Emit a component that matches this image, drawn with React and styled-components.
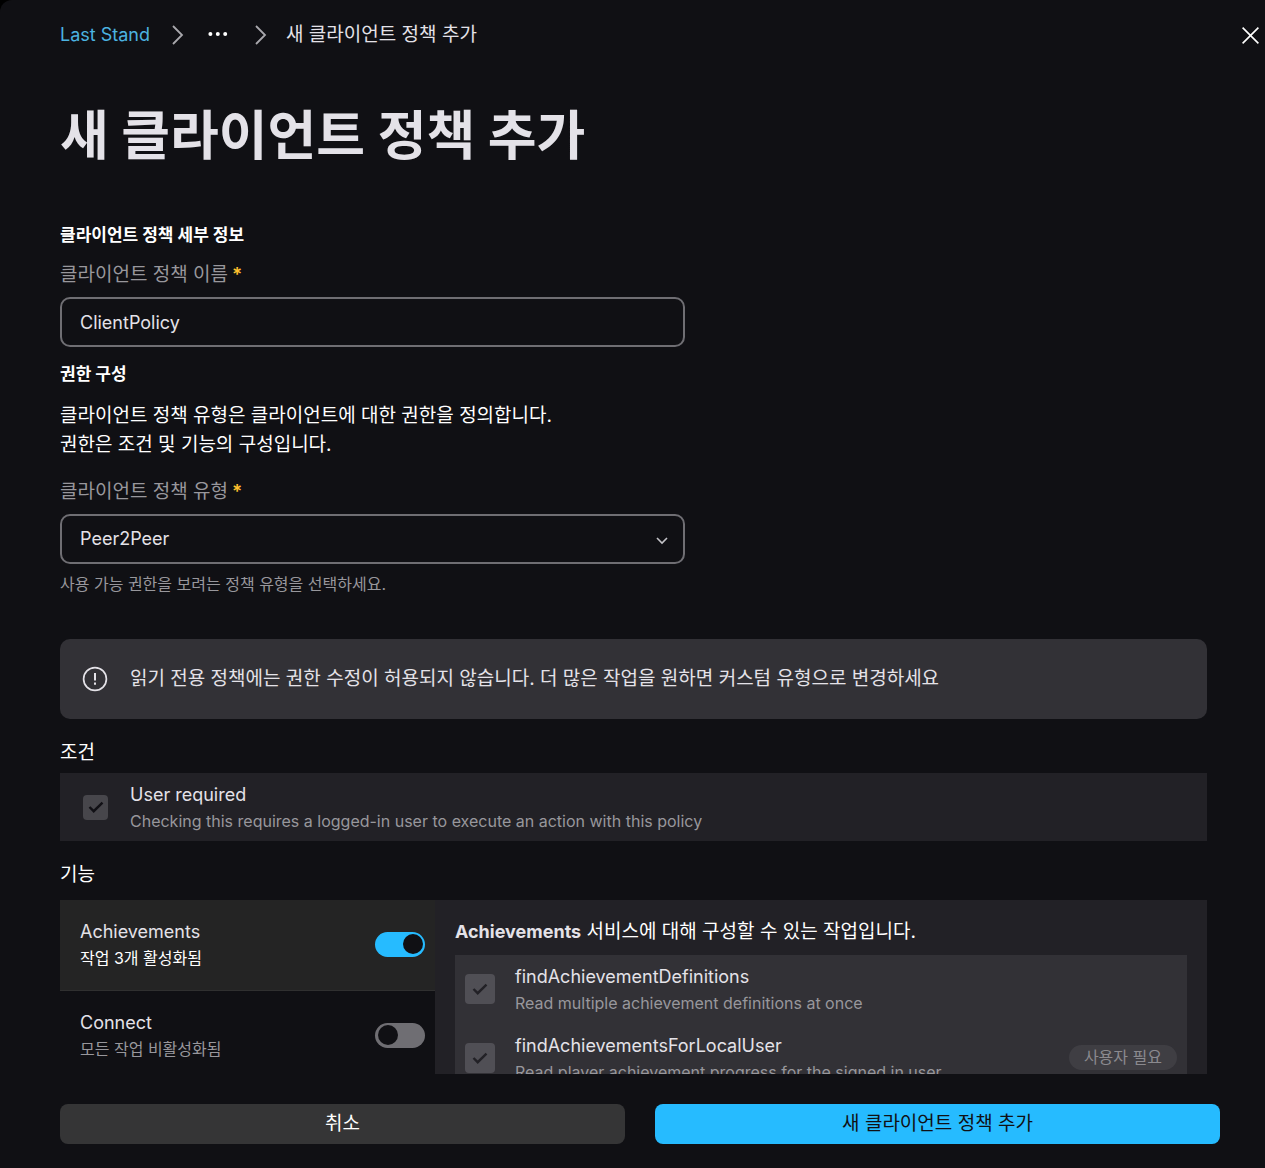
import * as React from 'react';
import styled, { createGlobalStyle, ThemeProvider } from 'styled-components';

const theme = {
    page: '#101014',
    panel: '#222126',
    panelActive: '#242424',
    raised: '#323136',
    border: '#6f6e73',
    text: '#ffffff',
    textSoft: '#e4e2e8',
    textMuted: '#98979c',
    accent: '#26bbff',
    link: '#4cb3e0',
    required: '#ffc02e',
};

const GlobalStyle = createGlobalStyle`
    *, *::before, *::after {
        box-sizing: border-box;
    }

    body {
        margin: 0;
        background: #000;
        color: ${theme.text};
        font-family: Inter, 'Noto Sans CJK KR', sans-serif;
        font-size: 18px;
        line-height: 28px;
    }

    h1, h2, h3, p, ul, ol {
        margin: 0;
        padding: 0;
    }

    ul, ol {
        list-style: none;
    }

    button, input, select {
        font: inherit;
        color: inherit;
    }
`;

const Page = styled.div`
    display: flex;
    flex-direction: column;
    height: 100vh;
    padding: 0 45px 24px 60px;
    border-top-left-radius: 12px;
    background: ${props => props.theme.page};
`;

const Header = styled.header`
    display: flex;
    flex: none;
    align-items: center;
    justify-content: space-between;
    height: 70px;
    margin-right: -40px;
`;

const Breadcrumbs = styled.ol`
    display: flex;
    align-items: center;
    gap: 18px;
`;

const Crumb = styled.li`
    display: flex;
    align-items: center;
    gap: 21px;
    color: ${props => props.theme.textSoft};
    font-size: ${props => (props.$current ? '19px' : '18px')};

    a {
        color: ${props => props.theme.link};
        text-decoration: none;
    }
`;

const IconButton = styled.button`
    display: flex;
    padding: ${props => (props.$padded ? '0 5px' : '0')};
    border: none;
    background: transparent;
    color: ${props => props.theme.text};
    cursor: pointer;
`;

const Content = styled.main`
    flex: 1;
    min-height: 0;
    padding: 34px 13px 0 0;
    overflow: auto;
    scrollbar-width: none;
`;

const Title = styled.h1`
    margin-bottom: 55px;
    color: ${props => props.theme.textSoft};
    font-size: 53px;
    font-weight: 700;
    line-height: 64px;
`;

const SectionTitle = styled.h2`
    font-size: 17px;
    font-weight: 700;
    line-height: 24px;
`;

const Description = styled.p`
    margin: 15px 0 19px;
    font-size: 19px;
    line-height: 29px;
`;

const Field = styled.div`
    max-width: 625px;
    margin: ${props => (props.$spaced ? '14px 0 15px' : '0 0 43px')};
`;

const FieldLabel = styled.label`
    display: block;
    margin-bottom: 8px;
    color: ${props => props.theme.textMuted};
    font-size: 19px;

    span {
        margin-left: 4px;
        color: ${props => props.theme.required};
        font-weight: 600;
    }
`;

const TextInput = styled.input`
    display: block;
    width: 100%;
    height: 50px;
    padding: 0 18px;
    border: 2px solid ${props => props.theme.border};
    border-radius: 10px;
    background: transparent;
    color: ${props => props.theme.textSoft};
`;

const SelectBox = styled.div`
    display: grid;
    align-items: center;

    > * {
        grid-area: 1 / 1;
    }

    svg {
        justify-self: end;
        margin-right: 15px;
        pointer-events: none;
    }
`;

const Select = styled(TextInput)`
    appearance: none;
`;

const HelpText = styled.p`
    margin-top: 8px;
    color: ${props => props.theme.textMuted};
    font-size: 16px;
    line-height: 24px;
`;

const Notice = styled.div`
    display: flex;
    align-items: center;
    gap: 22px;
    min-height: 80px;
    margin-bottom: 20px;
    padding: 0 22px;
    border-radius: 10px;
    background: ${props => props.theme.raised};
    color: ${props => props.theme.textSoft};
    font-size: 19px;
`;

const GroupTitle = styled.h3`
    margin-bottom: ${props => (props.$wide ? '11px' : '6px')};
    font-size: 19px;
    font-weight: 400;
`;

const Condition = styled.div`
    display: flex;
    align-items: center;
    gap: 22px;
    min-height: 68px;
    margin-bottom: 20px;
    padding: 0 23px;
    background: ${props => props.theme.panel};
`;

const CheckBox = styled.span`
    display: grid;
    flex: none;
    place-items: center;

    > * {
        grid-area: 1 / 1;
    }

    input {
        width: ${props => props.$size}px;
        height: ${props => props.$size}px;
        margin: 0;
        border-radius: 4px;
        appearance: none;
        background: ${props => (props.$raised ? '#504f55' : '#47464b')};
    }

    svg {
        color: ${props => (props.$raised ? '#222126' : '#111015')};
        pointer-events: none;
    }
`;

const OptionText = styled.label`
    display: flex;
    flex: 1;
    flex-direction: column;
    color: ${props => props.theme.textSoft};
    line-height: 28px;
`;

const OptionHint = styled.span`
    color: ${props => (props.$active ? props.theme.text : props.theme.textMuted)};
    font-size: 16px;
    line-height: 24px;
`;

const Features = styled.div`
    display: grid;
    grid-template-columns: 375px 1fr;
`;

const Service = styled.li`
    display: flex;
    align-items: center;
    justify-content: space-between;
    min-height: 91px;
    padding: 0 10px 2px 20px;
    border-bottom: 1px solid ${props => (props.$active ? '#303030' : 'transparent')};
    background: ${props => (props.$active ? props.theme.panelActive : 'transparent')};
`;

const Toggle = styled.input`
    display: flex;
    flex: none;
    align-items: center;
    width: 50px;
    height: 25px;
    margin: 0;
    padding: 0 3px;
    border-radius: 13px;
    appearance: none;
    background: ${props => props.theme.border};

    &::before {
        content: '';
        width: 20px;
        height: 20px;
        border-radius: 50%;
        background: ${props => props.theme.page};
    }

    &:checked {
        justify-content: flex-end;
        padding: 0 2px;
        background: ${props => props.theme.accent};
    }
`;

const Actions = styled.section`
    padding: 18px 20px 20px;
    background: ${props => props.theme.panel};
`;

const ActionsTitle = styled.p`
    margin-bottom: 9px;
    font-size: 19px;

    strong {
        color: ${props => props.theme.textSoft};
        font-size: 18px;
    }
`;

const Action = styled.li`
    display: flex;
    align-items: center;
    gap: 20px;
    min-height: 69px;
    padding: 0 10px 2px;
    background: ${props => props.theme.raised};
`;

const Badge = styled.span`
    padding: 0 15px;
    border-radius: 13px;
    background: #3f3e43;
    color: #8b8a8f;
    font-size: 16px;
    line-height: 25px;
`;

const Footer = styled.footer`
    display: grid;
    flex: none;
    grid-template-columns: 1fr 1fr;
    gap: 30px;
    margin-top: 30px;
`;

const Button = styled.button`
    height: 40px;
    padding: 0 20px;
    border: none;
    border-radius: 8px;
    background: ${props => (props.$primary ? props.theme.accent : '#353536')};
    color: ${props => (props.$primary ? props.theme.page : props.theme.text)};
    font-size: 19px;
    cursor: pointer;
`;

const Separator = () => (
    <svg width="14" height="22" viewBox="0 0 14 22" fill="none" stroke="#a9a8ad" strokeWidth="1.8" aria-hidden="true">
        <path d="M2 2l9 9-9 9" />
    </svg>
);

const CheckMark = () => (
    <svg width="16" height="14" viewBox="0 0 16 14" fill="none" stroke="currentColor" strokeWidth="2.4" aria-hidden="true">
        <path d="M1.5 7l4.2 4.2L14.5 2.6" />
    </svg>
);

const services = [
    { id: 'achievements', name: 'Achievements', hint: '작업 3개 활성화됨', enabled: true },
    { id: 'connect', name: 'Connect', hint: '모든 작업 비활성화됨', enabled: false },
];

const actions = [
    { name: 'findAchievementDefinitions', hint: 'Read multiple achievement definitions at once' },
    { name: 'findAchievementsForLocalUser', hint: 'Read player achievement progress for the signed in user', userRequired: true },
];

const Check = ({ id, size, raised }) => (
    <CheckBox $size={size} $raised={raised}>
        <input id={id} type="checkbox" defaultChecked disabled />
        <CheckMark />
    </CheckBox>
);

const App = () => (
    <ThemeProvider theme={theme}>
        <GlobalStyle />
        <Page>
            <Header>
                <nav>
                    <Breadcrumbs>
                        <Crumb><a href="#product">Last Stand</a><Separator /></Crumb>
                        <Crumb>
                            <IconButton type="button" $padded>
                                <svg width="20" height="20" viewBox="0 0 20 20" fill="currentColor" aria-hidden="true">
                                    <circle cx="2.4" cy="9" r="2" />
                                    <circle cx="9.8" cy="9" r="2" />
                                    <circle cx="17.2" cy="9" r="2" />
                                </svg>
                            </IconButton>
                            <Separator />
                        </Crumb>
                        <Crumb $current>새 클라이언트 정책 추가</Crumb>
                    </Breadcrumbs>
                </nav>
                <IconButton type="button">
                    <svg width="20" height="20" viewBox="0 0 20 20" fill="none" stroke="currentColor" strokeWidth="1.6" aria-hidden="true">
                        <path d="M2.6 2.6l15.8 15.8M18.4 2.6L2.6 18.4" />
                    </svg>
                </IconButton>
            </Header>

            <Content>
                <Title>새 클라이언트 정책 추가</Title>

                <SectionTitle>클라이언트 정책 세부 정보</SectionTitle>
                <Field $spaced>
                    <FieldLabel htmlFor="policy-name">클라이언트 정책 이름<span>*</span></FieldLabel>
                    <TextInput id="policy-name" type="text" defaultValue="ClientPolicy" />
                </Field>

                <SectionTitle>권한 구성</SectionTitle>
                <Description>
                    클라이언트 정책 유형은 클라이언트에 대한 권한을 정의합니다.<br />
                    권한은 조건 및 기능의 구성입니다.
                </Description>
                <Field>
                    <FieldLabel htmlFor="policy-type">클라이언트 정책 유형<span>*</span></FieldLabel>
                    <SelectBox>
                        <Select as="select" id="policy-type" defaultValue="Peer2Peer">
                            <option>Peer2Peer</option>
                        </Select>
                        <svg width="16" height="16" viewBox="0 0 16 16" fill="none" stroke="#c4c3c8" strokeWidth="1.6" aria-hidden="true">
                            <path d="M3 7l5 5 5-5" />
                        </svg>
                    </SelectBox>
                    <HelpText>사용 가능 권한을 보려는 정책 유형을 선택하세요.</HelpText>
                </Field>

                <Notice>
                    <svg width="26" height="26" viewBox="0 0 26 26" fill="none" stroke="currentColor" strokeWidth="1.7" aria-hidden="true">
                        <circle cx="13" cy="13" r="11.4" />
                        <path d="M13 7v7.5M13 16.6v2.2" strokeWidth="2" />
                    </svg>
                    <p>읽기 전용 정책에는 권한 수정이 허용되지 않습니다. 더 많은 작업을 원하면 커스텀 유형으로 변경하세요</p>
                </Notice>

                <GroupTitle>조건</GroupTitle>
                <Condition>
                    <Check id="user-required" size={25} />
                    <OptionText htmlFor="user-required">
                        User required
                        <OptionHint>Checking this requires a logged-in user to execute an action with this policy</OptionHint>
                    </OptionText>
                </Condition>

                <GroupTitle $wide>기능</GroupTitle>
                <Features>
                    <ul>
                        {services.map(({ id, name, hint, enabled }) => (
                            <Service key={id} $active={enabled}>
                                <OptionText htmlFor={id}>
                                    {name}
                                    <OptionHint $active={enabled}>{hint}</OptionHint>
                                </OptionText>
                                <Toggle id={id} type="checkbox" defaultChecked={enabled} />
                            </Service>
                        ))}
                    </ul>
                    <Actions>
                        <ActionsTitle><strong>Achievements</strong> 서비스에 대해 구성할 수 있는 작업입니다.</ActionsTitle>
                        <ul>
                            {actions.map(({ name, hint, userRequired }) => (
                                <Action key={name}>
                                    <Check id={name} size={30} raised />
                                    <OptionText htmlFor={name}>
                                        {name}
                                        <OptionHint>{hint}</OptionHint>
                                    </OptionText>
                                    {userRequired ? <Badge>사용자 필요</Badge> : null}
                                </Action>
                            ))}
                        </ul>
                    </Actions>
                </Features>
            </Content>

            <Footer>
                <Button type="button">취소</Button>
                <Button type="button" $primary>새 클라이언트 정책 추가</Button>
            </Footer>
        </Page>
    </ThemeProvider>
);

export default App;
